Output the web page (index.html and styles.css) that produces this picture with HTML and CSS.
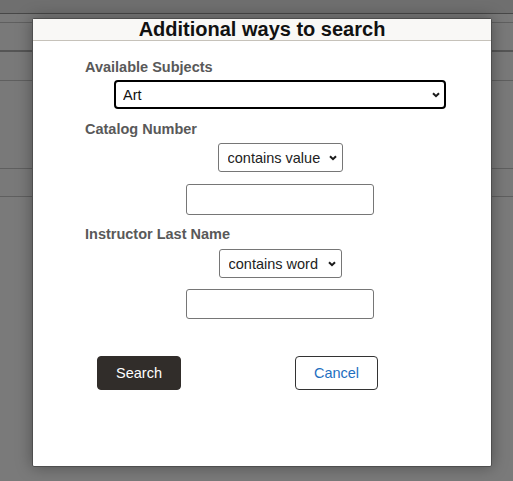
FILE: index.html
```html
<!DOCTYPE html>
<html>
<head>
<meta charset="utf-8">
<link rel="stylesheet" href="styles.css">
</head>
<body>
<div class="page">
  <div class="band band-top"></div>
  <div class="band band-2"></div>
  <div class="band band-3"></div>
  <div class="band band-4"></div>
  <div class="band band-5"></div>
  <div class="band band-6"></div>
</div>

<div class="modal">
  <div class="modal-header">Additional ways to search</div>
  <div class="modal-body">
    <div class="label label-first">Available Subjects</div>
    <div class="field-row">
      <span class="sel sel-full">
        <select class="select select-focus"><option>Art</option></select>
        <svg class="chev" width="8" height="6" viewBox="0 0 8 6"><path d="M1 1.2 L4 4.2 L7 1.2" fill="none" stroke="#1a1a1a" stroke-width="2"/></svg>
      </span>
    </div>

    <div class="label label-gap1">Catalog Number</div>
    <div class="field-row">
      <span class="sel">
        <select class="select select-value"><option>contains value</option></select>
        <svg class="chev" width="8" height="6" viewBox="0 0 8 6"><path d="M1 1.2 L4 4.2 L7 1.2" fill="none" stroke="#1a1a1a" stroke-width="2"/></svg>
      </span>
    </div>
    <div class="field-row input-row1">
      <input class="text-input" type="text">
    </div>

    <div class="label label-gap2">Instructor Last Name</div>
    <div class="field-row select-row3">
      <span class="sel">
        <select class="select select-word"><option>contains word</option></select>
        <svg class="chev" width="8" height="6" viewBox="0 0 8 6"><path d="M1 1.2 L4 4.2 L7 1.2" fill="none" stroke="#1a1a1a" stroke-width="2"/></svg>
      </span>
    </div>
    <div class="field-row input-row2">
      <input class="text-input input-2" type="text">
    </div>
  </div>

  <div class="buttons">
    <button class="btn btn-primary">Search</button>
    <button class="btn btn-secondary">Cancel</button>
  </div>
</div>
</body>
</html>
```

FILE: styles.css
```css
html, body {
  margin: 0;
  padding: 0;
}
body {
  background: #7a7a7a;
  width: 513px;
  height: 481px;
  overflow: hidden;
  font-family: "Liberation Sans", Arial, sans-serif;
}
.page {
  display: flex;
  flex-direction: column;
}
.band {
  background: #797979;
}
.band-top {
  height: 13px;
  background: #6f6f6f;
  border-bottom: 1px solid #474747;
}
.band-2 {
  height: 8px;
  border-bottom: 1px solid #5f5f5f;
}
.band-3 {
  height: 27px;
  border-bottom: 2px solid #555;
}
.band-4 {
  height: 28px;
  border-bottom: 1px solid #5f5f5f;
}
.band-5 {
  height: 87px;
  border-bottom: 1px solid #5f5f5f;
}
.band-6 {
  height: 27px;
  border-bottom: 1px solid #5f5f5f;
}

.modal {
  position: absolute;
  left: 32px;
  top: 18px;
  width: 458px;
  height: 447px;
  background: #fff;
  border: 1px solid #4e4e4e;
  border-radius: 2px;
  box-shadow: 0 0 16px rgba(0, 0, 0, 0.35);
  display: flex;
  flex-direction: column;
}
.modal-header {
  height: 21px;
  line-height: 21px;
  background: #f9f8f6;
  border-bottom: 1px solid #c6c2ba;
  text-align: center;
  font-size: 20px;
  font-weight: bold;
  color: #111;
}
.modal-body {
  padding-left: 52px;
  display: flex;
  flex-direction: column;
}
.label {
  font-size: 14.5px;
  line-height: 18px;
  font-weight: bold;
  color: #595959;
}
.label-first {
  margin-top: 17px;
}
.label-gap1 {
  margin-top: 11px;
}
.label-gap2 {
  margin-top: 10px;
}
.field-row {
  margin-left: 29px;
  width: 332px;
  display: flex;
  justify-content: center;
  margin-top: 5px;
}
.label-first + .field-row {
  margin-top: 4px;
}
.input-row1 {
  margin-top: 12px;
}
.select-row3 {
  margin-top: 6px;
}
.input-row2 {
  margin-top: 11px;
}
.sel {
  position: relative;
  display: inline-block;
}
.sel-full {
  width: 332px;
}
.select {
  -webkit-appearance: none;
  appearance: none;
  box-sizing: border-box;
  height: 29px;
  margin: 0;
  font-family: "Liberation Sans", Arial, sans-serif;
  font-size: 14.5px;
  color: #222;
  background: #fff;
  border: 1px solid #767676;
  border-radius: 3px;
  padding: 0 0 0 9px;
  display: block;
  outline: none;
}
.select-focus {
  width: 332px;
  border: 2px solid #000;
  border-radius: 4px;
  padding-left: 7px;
  color: #111;
}
.select-value {
  width: 125px;
}
.select-word {
  width: 123px;
}
.chev {
  position: absolute;
  right: 6px;
  top: 50%;
  margin-top: -3px;
  pointer-events: none;
}
.text-input {
  box-sizing: border-box;
  width: 188px;
  height: 31px;
  margin: 0;
  border: 1px solid #767676;
  border-radius: 3px;
  background: #fff;
  font-family: "Liberation Sans", Arial, sans-serif;
  font-size: 14.5px;
  padding: 0 6px;
}
.input-2 {
  height: 30px;
}
.buttons {
  display: flex;
  gap: 114px;
  padding-left: 64px;
  margin-top: 37px;
}
.btn {
  box-sizing: border-box;
  height: 34px;
  margin: 0;
  font-family: "Liberation Sans", Arial, sans-serif;
  font-size: 14.5px;
  border-radius: 4px;
  cursor: pointer;
  padding: 0;
}
.btn-primary {
  width: 84px;
  background: #312d2a;
  color: #fff;
  border: 1px solid #312d2a;
}
.btn-secondary {
  width: 83px;
  background: #fff;
  color: #1f6fbf;
  border: 1px solid #333;
}
```
